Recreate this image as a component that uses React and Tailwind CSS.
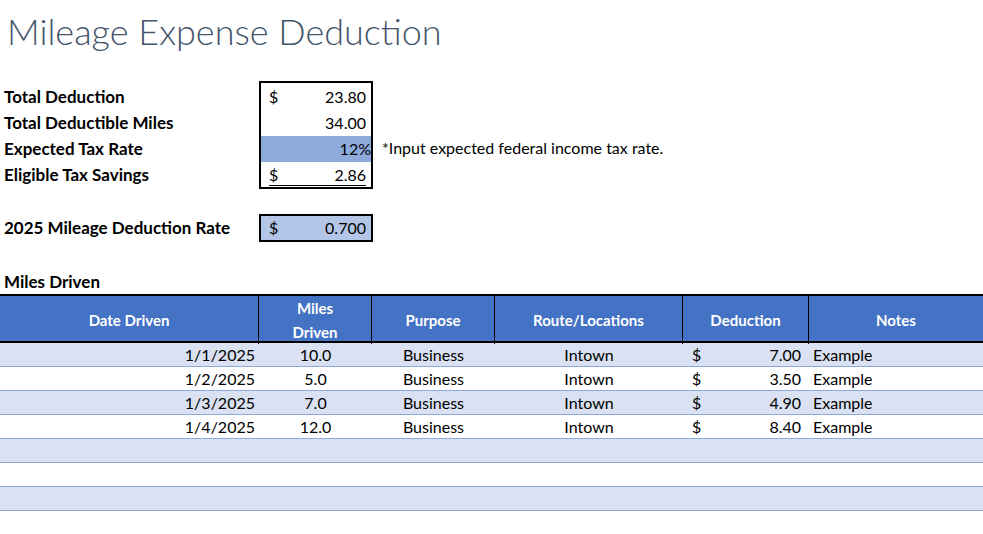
import React from 'react'

const rows = [
  { date: '1/1/2025', miles: '10.0', ded: '7.00' },
  { date: '1/2/2025', miles: '5.0', ded: '3.50' },
  { date: '1/3/2025', miles: '7.0', ded: '4.90' },
  { date: '1/4/2025', miles: '12.0', ded: '8.40' },
  null, null, null, null,
]

const cols = 'grid grid-cols-[259px_113px_123px_188px_126px_174px]'

const App = () => {
  return (
    <div className="w-[983px] h-[534px] overflow-hidden bg-white text-black text-[16px]" style={{ fontFamily: 'Lato, "Open Sans", sans-serif' }}>
      <div className="h-[81px] pl-[7px] pt-[9px] text-[36px] font-light leading-[44px] text-[#44546A]">Mileage Expense Deduction</div>

      <div className="flex">
        <div className="w-[259px] pl-[4px] pt-[3px] font-bold text-[17px]">
          <div className="h-[26px] leading-[26px]">Total Deduction</div>
          <div className="h-[26px] leading-[26px]">Total Deductible Miles</div>
          <div className="h-[26px] leading-[26px]">Expected Tax Rate</div>
          <div className="h-[26px] leading-[26px]">Eligible Tax Savings</div>
        </div>
        <div className="w-[114px] h-[108px] border-2 border-black pt-[1px]">
          <div className="h-[26px] flex justify-between items-center px-[8px] pr-[5px]"><span>$</span><span>23.80</span></div>
          <div className="h-[26px] flex justify-end items-center pr-[5px]">34.00</div>
          <div className="h-[26px] flex justify-end items-center pr-[0px] bg-[#8EA9DB]">12%</div>
          <div className="h-[26px] flex items-center px-[8px] pr-[5px]">
            <div className="flex justify-between w-full border-b border-black leading-[21px]"><span>$</span><span>2.86</span></div>
          </div>
        </div>
        <div className="pt-[55px] pl-[9px] text-[16px]">*Input expected federal income tax rate.</div>
      </div>

      <div className="flex mt-[25px]">
        <div className="w-[259px] pl-[4px] font-bold text-[17px] leading-[27px]">2025 Mileage Deduction Rate</div>
        <div className="w-[114px] h-[28px] border-2 border-black bg-[#B4C6E7] flex justify-between items-center px-[8px] pr-[5px]"><span>$</span><span>0.700</span></div>
      </div>

      <div className="mt-[28px] pl-[4px] font-bold text-[17px] leading-[24px] h-[24px]">Miles Driven</div>

      <div className={`${cols} h-[49px] bg-[#4472C4] text-white font-bold text-[15px] border-y-2 border-black`}>
        <div className="flex items-center justify-center border-r border-black">Date Driven</div>
        <div className="flex items-center justify-center text-center leading-[24px] border-r border-black">Miles<br />Driven</div>
        <div className="flex items-center justify-center border-r border-black">Purpose</div>
        <div className="flex items-center justify-center border-r border-black">Route/Locations</div>
        <div className="flex items-center justify-center border-r border-black">Deduction</div>
        <div className="flex items-center justify-center">Notes</div>
      </div>

      {rows.map((r, i) => (
        <div key={i} className={`${cols} h-[24px] border-b border-[#8EA9DB] ${i % 2 === 0 ? 'bg-[#D9E1F2]' : 'bg-white'}`}>
          <div className="flex items-center justify-end pr-[4px]">{r && r.date}</div>
          <div className="flex items-center justify-center">{r && r.miles}</div>
          <div className="flex items-center justify-center">{r && 'Business'}</div>
          <div className="flex items-center justify-center">{r && 'Intown'}</div>
          <div className="flex items-center justify-between pl-[9px] pr-[8px]">{r && <><span>$</span><span>{r.ded}</span></>}</div>
          <div className="flex items-center pl-[4px]">{r && 'Example'}</div>
        </div>
      ))}
    </div>
  )
}

export default App
